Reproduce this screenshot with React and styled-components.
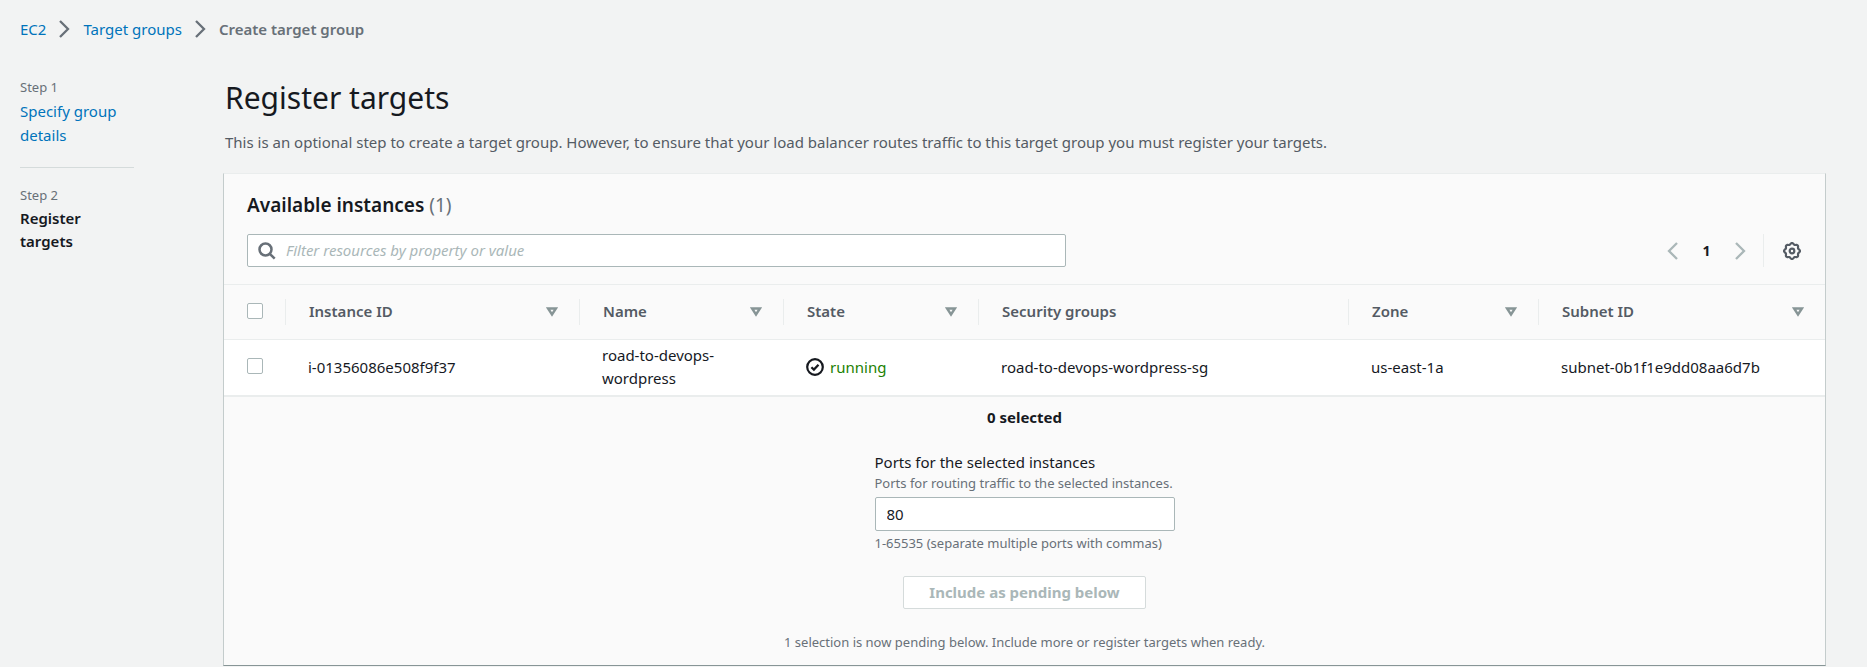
import React, { useState } from "react";
import styled, { createGlobalStyle } from "styled-components";

const GlobalStyle = createGlobalStyle`
  * { box-sizing: border-box; }
  body {
    margin: 0;
    background: #f2f3f3;
    color: #16191f;
    font-family: "Noto Sans", "Open Sans", sans-serif;
    font-size: 15px;
    line-height: 23px;
  }
  h1, h2, p, ol { margin: 0; padding: 0; }
  input, button { font: inherit; color: inherit; }
  svg { display: block; flex: none; }
`;

const Page = styled.div`
  padding: 17px 41px 0 20px;
`;

const Breadcrumbs = styled.ol`
  display: flex;
  align-items: center;
  gap: 13px;
  list-style: none;
  height: 24px;
`;

const Crumb = styled.li`
  display: flex;
  align-items: center;
  gap: 13px;
  color: #687078;
  font-weight: ${(p) => (p.$current ? 600 : 400)};
`;

const Link = styled.a`
  color: #0073bb;
  text-decoration: none;
`;

const Columns = styled.div`
  display: flex;
  align-items: flex-start;
  gap: 89px;
  margin-top: 33px;
`;

const Steps = styled.ol`
  && { padding-top: 2px; }
  flex: 0 0 114px;
  list-style: none;
`;

const Step = styled.li`
  padding: 0 12px 20px 0;
  & + & {
    border-top: 1px solid #d5dbdb;
    padding-top: 16px;
  }
`;

const StepLabel = styled.div`
  color: #687078;
  font-size: 13px;
`;

const StepName = styled.div`
  line-height: ${(p) => (p.$current ? "23px" : "24px")};
  font-weight: ${(p) => (p.$current ? 600 : 400)};
`;

const Main = styled.main`
  flex: 1;
  min-width: 0;
`;

const Title = styled.h1`
  && { padding: 4px 2px 0; }
  font-size: 30px;
  line-height: 40px;
  font-weight: 400;
`;

const Lead = styled.p`
  && { padding: 13px 2px 19px; }
  color: #545b64;
`;

const Panel = styled.section`
  background: #fafafa;
  border: 1px solid #c4cccc;
  border-top-color: #eaeded;
  border-bottom-color: #879596;
`;

const PanelHead = styled.header`
  padding: 19px 24px 17px 23px;
  border-bottom: 1px solid #eaeded;
`;

const PanelTitle = styled.h2`
  font-size: 19px;
  line-height: 24px;
  font-weight: 600;
  span { font-weight: 400; color: #687078; }
`;

const Toolbar = styled.div`
  display: flex;
  align-items: center;
  justify-content: space-between;
  margin-top: 17px;
`;

const SearchBox = styled.label`
  display: flex;
  align-items: center;
  gap: 10px;
  flex: 0 1 819px;
  height: 33px;
  padding: 0 10px;
  background: #fff;
  border: 1px solid #aab7b8;
  border-radius: 2px;
  color: #687078;
`;

const SearchInput = styled.input`
  flex: 1;
  min-width: 0;
  padding: 0;
  border: 0;
  outline: 0;
  background: none;
  color: #16191f;
  &::placeholder { color: #aab7b8; font-style: italic; opacity: 1; }
`;

const Pager = styled.div`
  display: flex;
  align-items: center;
`;

const IconButton = styled.button`
  display: flex;
  padding: 0;
  border: 0;
  background: none;
  color: ${(p) => (p.disabled ? "#aab7b8" : "#545b64")};
`;

const PageNumber = styled.button`
  width: 57px;
  padding: 0;
  border: 0;
  background: none;
  font-size: 14px;
  font-weight: 700;
`;

const Divider = styled.span`
  width: 1px;
  height: 33px;
  margin: 0 19px 0 17px;
  background: #eaeded;
`;

const Table = styled.table`
  width: 100%;
  table-layout: fixed;
  border-collapse: collapse;
`;

const HeadCell = styled.th`
  width: ${(p) => p.$width || "auto"};
  height: 54px;
  padding: 0;
  border-bottom: 1px solid #eaeded;
  text-align: left;
  font-weight: 600;
  color: #545b64;
`;

const HeadInner = styled.div`
  display: flex;
  align-items: center;
  justify-content: space-between;
  height: 26px;
  padding: 0 21px 0 23px;
  border-right: ${(p) => (p.$last ? "0" : "1px solid #eaeded")};
  color: inherit;
`;

const SortButton = styled(IconButton)`
  color: #879596;
`;

const Cell = styled.td`
  height: 57px;
  padding: 0 22px;
  background: #fff;
  border-bottom: 2px solid #eaeded;
  &:first-child { padding-left: 23px; }
`;

const Checkbox = styled.input`
  display: block;
  appearance: none;
  width: 16px;
  height: 16px;
  margin: 0 0 2px;
  background: #fff;
  border: 1px solid #aab7b8;
  border-radius: 2px;
  &:checked { background: #0073bb; border-color: #0073bb; }
`;

const Status = styled.span`
  display: flex;
  align-items: center;
  gap: 6px;
  color: #1d8102;
`;

const Footer = styled.div`
  display: flex;
  flex-direction: column;
  align-items: center;
  padding: 9px 24px 14px;
`;

const Selected = styled.p`
  font-weight: 700;
`;

const Field = styled.div`
  display: flex;
  flex-direction: column;
  width: 300px;
  margin-top: 22px;
`;

const Hint = styled.p`
  color: #687078;
  font-size: 13px;
  line-height: 18px;
  white-space: nowrap;
`;

const PortInput = styled.input`
  height: 34px;
  margin: 5px 0 3px;
  padding: 0 11px;
  border: 1px solid #aab7b8;
  border-radius: 2px;
  background: #fff;
`;

const IncludeButton = styled.button`
  height: 33px;
  margin: 24px 0;
  padding: 0 25px;
  border: 1px solid #d5dbdb;
  border-radius: 2px;
  background: #fff;
  color: #aab7b8;
  font-weight: 700;
`;

const Chevron = ({ left }) => (
  <svg width="11" height="18" viewBox="0 0 11 18" fill="none" stroke="currentColor" strokeWidth="2.3">
    <path d={left ? "M10 1L2 9l8 8" : "M1 1l8 8-8 8"} />
  </svg>
);

const SearchIcon = () => (
  <svg width="18" height="18" viewBox="0 0 18 18" fill="none" stroke="currentColor" strokeWidth="2.5">
    <circle cx="7.5" cy="7.5" r="6" />
    <path d="M11.8 11.8l4.900 4.900" />
  </svg>
);

// Outline of a gear with eight rounded teeth.
const GEAR_OUTLINE = Array.from({ length: 96 }, (_, i) => {
  const angle = (i / 96) * Math.PI * 2;
  const radius = 7.3 + 0.7 * Math.cos(8 * angle);
  return `${(9 + radius * Math.cos(angle)).toFixed(2)},${(9 + radius * Math.sin(angle)).toFixed(2)}`;
}).join(" ");

const GearIcon = () => (
  <svg width="18" height="18" viewBox="0 0 18 18" fill="none" stroke="currentColor" strokeWidth="2.2" strokeLinejoin="round">
    <polygon points={GEAR_OUTLINE} />
    <circle cx="9" cy="9" r="2.3" />
  </svg>
);

const SortIcon = () => (
  <svg width="12" height="10" viewBox="0 0 12 10" fill="none" stroke="currentColor" strokeWidth="2.4">
    <path d="M2.100 1.500h7.800L6 7.500z" />
  </svg>
);

const CheckIcon = () => (
  <svg width="18" height="18" viewBox="0 0 18 18" fill="none" stroke="#16191f" strokeWidth="2.200">
    <circle cx="9" cy="9" r="7.800" />
    <path d="M5.400 9.200l2.500 2.400 4.600-4.900" />
  </svg>
);

const COLUMNS = [
  { name: "Instance ID", width: "294px", sort: true },
  { name: "Name", width: "204px", sort: true },
  { name: "State", width: "195px", sort: true },
  { name: "Security groups" },
  { name: "Zone", width: "190px", sort: true },
  { name: "Subnet ID", width: "286px", sort: true, last: true },
];

export default function App() {
  const [ports, setPorts] = useState("80");
  return (
    <Page>
      <GlobalStyle />
      <nav aria-label="Breadcrumbs">
        <Breadcrumbs>
          <Crumb><Link href="#ec2">EC2</Link><Chevron /></Crumb>
          <Crumb><Link href="#target-groups">Target groups</Link><Chevron /></Crumb>
          <Crumb $current>Create target group</Crumb>
        </Breadcrumbs>
      </nav>
      <Columns>
        <Steps>
          <Step>
            <StepLabel>Step 1</StepLabel>
            <StepName><Link href="#details">Specify group details</Link></StepName>
          </Step>
          <Step>
            <StepLabel>Step 2</StepLabel>
            <StepName $current>Register targets</StepName>
          </Step>
        </Steps>
        <Main>
          <Title>Register targets</Title>
          <Lead>
            This is an optional step to create a target group. However, to ensure that your load
            balancer routes traffic to this target group you must register your targets.
          </Lead>
          <Panel>
            <PanelHead>
              <PanelTitle>Available instances <span>(1)</span></PanelTitle>
              <Toolbar>
                <SearchBox>
                  <SearchIcon />
                  <SearchInput aria-label="Filter resources" placeholder="Filter resources by property or value" />
                </SearchBox>
                <Pager>
                  <IconButton disabled aria-label="Previous page"><Chevron left /></IconButton>
                  <PageNumber>1</PageNumber>
                  <IconButton disabled aria-label="Next page"><Chevron /></IconButton>
                  <Divider />
                  <IconButton aria-label="Preferences"><GearIcon /></IconButton>
                </Pager>
              </Toolbar>
            </PanelHead>
            <Table>
              <thead>
                <tr>
                  <HeadCell $width="62px">
                    <HeadInner><Checkbox type="checkbox" aria-label="Select all instances" /></HeadInner>
                  </HeadCell>
                  {COLUMNS.map((c) => (
                    <HeadCell key={c.name} $width={c.width}>
                      <HeadInner $last={c.last}>
                        {c.name}
                        {c.sort && <SortButton aria-label={`Sort by ${c.name}`}><SortIcon /></SortButton>}
                      </HeadInner>
                    </HeadCell>
                  ))}
                </tr>
              </thead>
              <tbody>
                <tr>
                  <Cell><Checkbox type="checkbox" aria-label="Select i-01356086e508f9f37" /></Cell>
                  <Cell>i-01356086e508f9f37</Cell>
                  <Cell>road-to-devops-wordpress</Cell>
                  <Cell><Status><CheckIcon />running</Status></Cell>
                  <Cell>road-to-devops-wordpress-sg</Cell>
                  <Cell>us-east-1a</Cell>
                  <Cell>subnet-0b1f1e9dd08aa6d7b</Cell>
                </tr>
              </tbody>
            </Table>
            <Footer>
              <Selected>0 selected</Selected>
              <Field>
                <label htmlFor="ports">Ports for the selected instances</label>
                <Hint>Ports for routing traffic to the selected instances.</Hint>
                <PortInput id="ports" value={ports} onChange={(e) => setPorts(e.target.value)} />
                <Hint>1-65535 (separate multiple ports with commas)</Hint>
              </Field>
              <IncludeButton disabled>Include as pending below</IncludeButton>
              <Hint>1 selection is now pending below. Include more or register targets when ready.</Hint>
            </Footer>
          </Panel>
        </Main>
      </Columns>
    </Page>
  );
}
